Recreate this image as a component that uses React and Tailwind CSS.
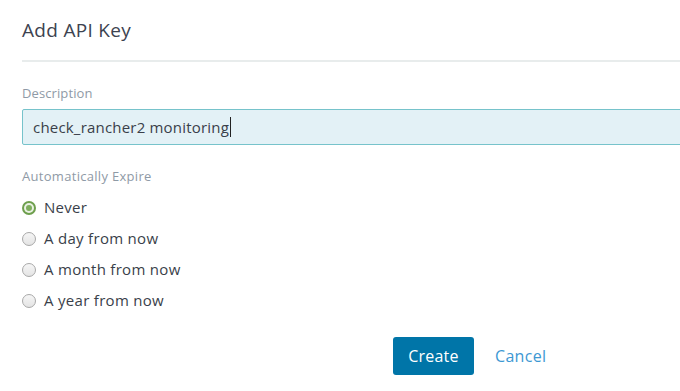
import React, { useState } from 'react';

const options = [
  { value: 'never', label: 'Never' },
  { value: 'day', label: 'A day from now' },
  { value: 'month', label: 'A month from now' },
  { value: 'year', label: 'A year from now' },
];

function Radio({ checked }) {
  return checked ? (
    <span className="w-[14px] h-[14px] rounded-full bg-[#6e9f4d] flex items-center justify-center shrink-0">
      <span className="w-[10px] h-[10px] rounded-full bg-[#e9f1e3] flex items-center justify-center">
        <span className="w-[6px] h-[6px] rounded-full bg-[#7fae5e]"></span>
      </span>
    </span>
  ) : (
    <span className="w-[14px] h-[14px] rounded-full border border-[#a8a8a8] bg-gradient-to-b from-[#f6f6f6] to-[#e4e4e4] shrink-0"></span>
  );
}

export default function App() {
  const [expire, setExpire] = useState('never');

  return (
    <div className="w-[680px] h-[391px] overflow-hidden bg-white pl-[22px] font-['Open_Sans',sans-serif] text-[#3a3f4a]">
      <div className="w-[700px]">
        <h1 className="pt-[18px] pb-[18px] text-[19px] leading-[24px] tracking-[0.3px] text-[#3d4350]">Add API Key</h1>
        <div className="h-[2px] bg-[#e8ecec]"></div>

        <div className="pt-[23px]">
          <label className="block text-[13px] leading-[16px] tracking-[0.1px] text-[#8f9aa6] mb-[8px]">Description</label>
          <div className="h-[36px] rounded-l-[2px] border border-[#76c3cb] bg-[#e3f1f6] px-[10px] flex items-center text-[15px] tracking-[0.2px]">
            check_rancher2 monitoring<span className="w-px h-[20px] bg-[#222] ml-px"></span>
          </div>
        </div>

        <div className="pt-[23px]">
          <label className="block text-[13px] leading-[16px] tracking-[0.3px] text-[#8f9aa6]">Automatically Expire</label>
          <div className="mt-[8px] flex flex-col">
            {options.map(o => (
              <button
                key={o.value}
                onClick={() => setExpire(o.value)}
                className="h-[31px] flex items-center gap-[8px] text-[15px] tracking-[0.3px] text-[#3a3f4a] text-left"
              >
                <Radio checked={expire === o.value} />
                <span>{o.label}</span>
              </button>
            ))}
          </div>
        </div>
      </div>

      <div className="mt-[21px] flex items-center gap-[21px] pl-[371px]">
        <button className="w-[81px] h-[38px] rounded-[3px] bg-[#0075a8] text-white text-[16px] tracking-[0.2px]">Create</button>
        <button className="text-[16px] tracking-[0.3px] text-[#3d98d3]">Cancel</button>
      </div>
    </div>
  );
}
